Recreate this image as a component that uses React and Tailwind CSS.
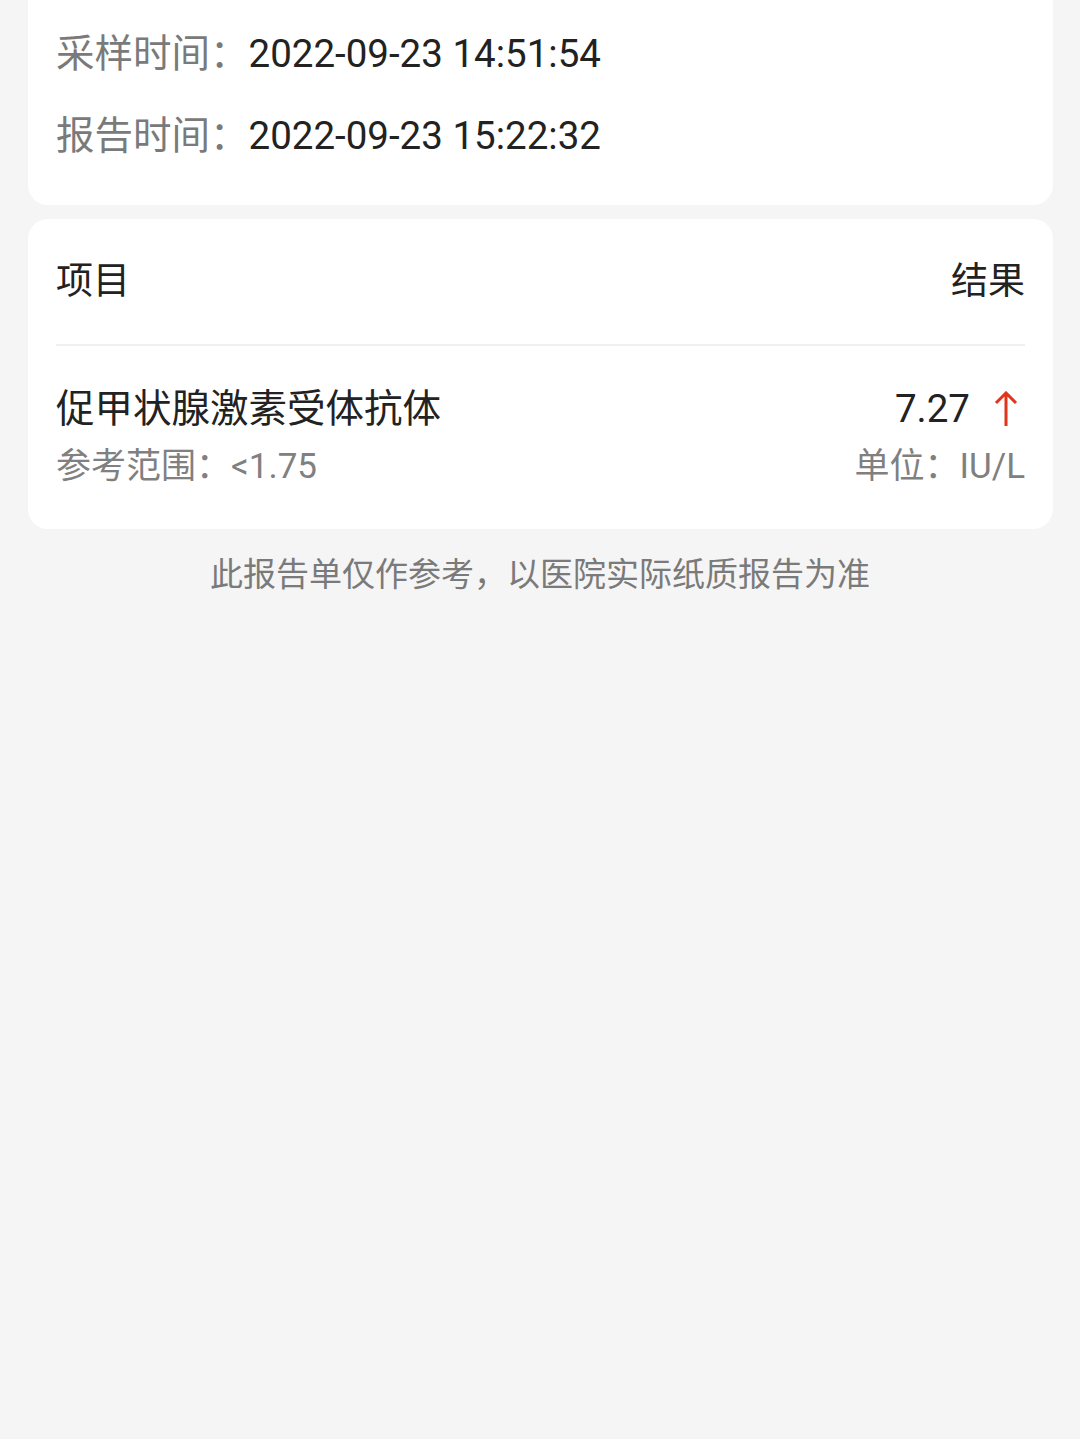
export default function App() {
  const font = "font-['Roboto','Noto_Sans_CJK_SC',sans-serif]"

  return (
    <div className={`min-h-[1439px] w-[1080px] bg-[#f5f5f5] ${font}`}>
      {/* Time info card (top cut off) */}
      <div className="ml-[28px] mr-[27px] rounded-b-[20px] bg-white px-[28px] pt-[13px] pb-[28px]">
        <div className="flex h-[82px] items-center text-[38.5px] leading-none">
          <span className="text-[#7a7a7a]">采样时间：</span>
          <span className="text-[#222222]">2022-09-23 14:51:54</span>
        </div>
        <div className="flex h-[82px] items-center text-[38.5px] leading-none">
          <span className="text-[#7a7a7a]">报告时间：</span>
          <span className="text-[#222222]">2022-09-23 15:22:32</span>
        </div>
      </div>

      {/* Results card */}
      <div className="ml-[28px] mr-[27px] mt-[14px] rounded-[20px] bg-white px-[28px]">
        <div className="flex h-[127px] items-center justify-between border-b-2 border-[#f0f0f0] text-[37px] text-[#222222]">
          <span>项目</span>
          <span>结果</span>
        </div>
        <div className="flex justify-between pt-[39px] pb-[39px]">
          <div className="flex flex-col gap-[11px]">
            <span className="text-[38.5px] leading-[48px] text-[#222222]">促甲状腺激素受体抗体</span>
            <span className="text-[35px] leading-[46px] text-[#808080]">参考范围：&lt;1.75</span>
          </div>
          <div className="flex flex-col items-end gap-[11px]">
            <div className="flex h-[48px] items-center gap-[24px]">
              <span className="text-[38.5px] leading-[48px] text-[#222222]">7.27</span>
              <svg width="24" height="36" viewBox="0 0 24 36" className="mr-[7px]">
                <path d="M12 2 L12 35 M2 12 L12 2 L22 12" fill="none" stroke="#e0341c" strokeWidth="3" />
              </svg>
            </div>
            <span className="text-[35px] leading-[46px] text-[#808080]">单位：IU/L</span>
          </div>
        </div>
      </div>

      <p className="mt-[24px] text-center text-[33px] leading-[44px] text-[#7a7a7a]">
        此报告单仅作参考，以医院实际纸质报告为准
      </p>
    </div>
  )
}
